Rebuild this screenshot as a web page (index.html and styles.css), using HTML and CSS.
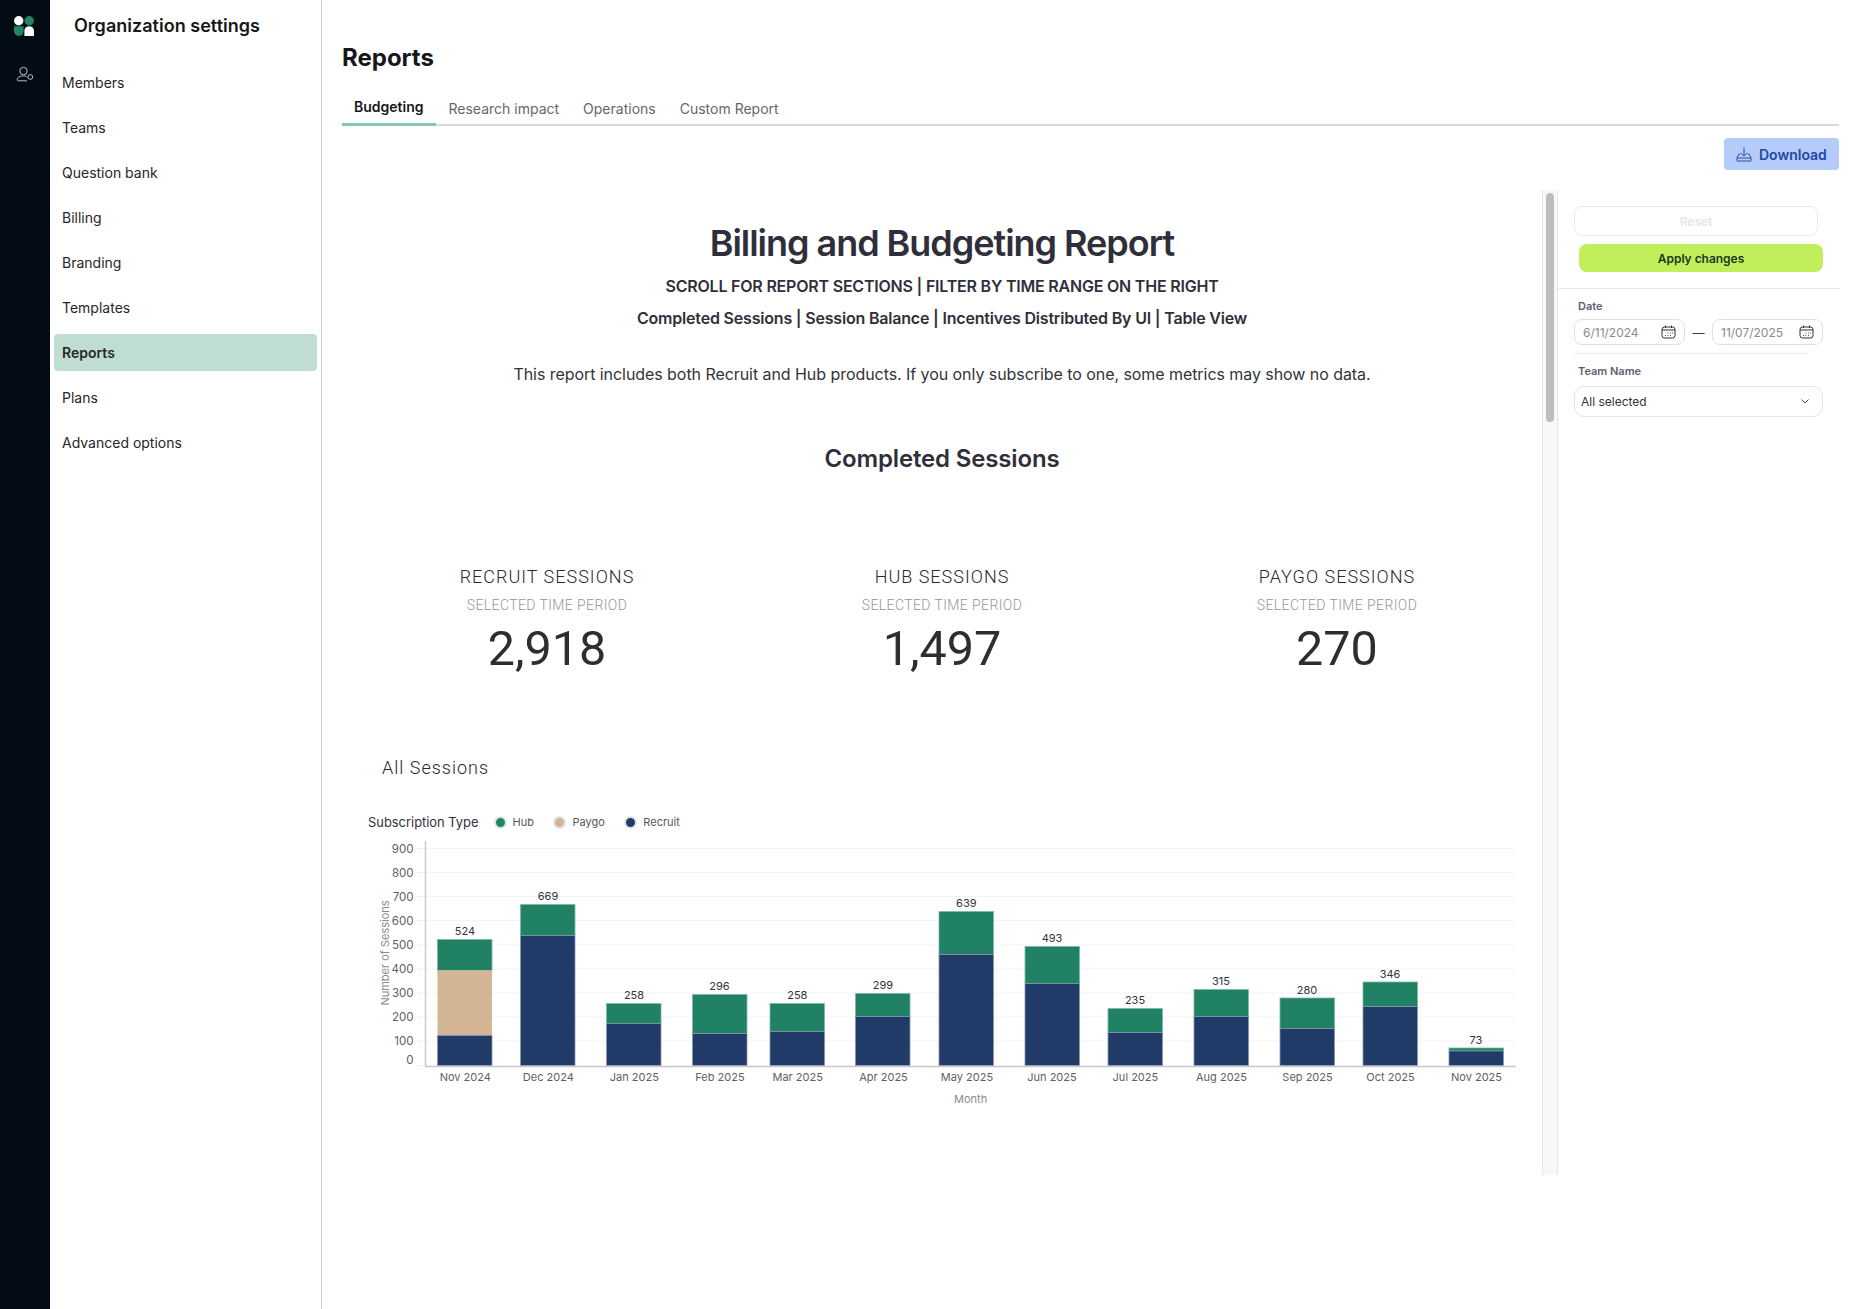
FILE: index.html
```html
<!DOCTYPE html>
<html lang="en">
<head>
<meta charset="utf-8">
<title>Reports</title>
<link rel="stylesheet" href="styles.css">
</head>
<body>
<div class="app">
  <aside class="rail">
    <svg class="logo" width="20" height="20" viewBox="0 0 20 20">
      <circle cx="4.7" cy="4.7" r="4.7" fill="#fff"/>
      <circle cx="15.2" cy="4.7" r="4.7" fill="#1f8563"/>
      <path d="M0 10.2h9.6v5a4.8 4.8 0 0 1-9.6 0z" fill="#1f8563"/>
      <path d="M10.4 20v-5a4.8 4.8 0 0 1 9.6 0v5z" fill="#fff"/>
    </svg>
    <svg class="person" width="18" height="16" viewBox="0 0 18 16" fill="none" stroke="#b9bdc2" stroke-width="1">
      <circle cx="7.500" cy="5" r="3.700"/>
      <path d="M2.500 14.800h8.500M2.500 14.800c-1.800 0-1.600-1.700-.6-2.900 1.100-1.300 3-2 5.600-2 1.200 0 2.200.2 3 .5"/>
      <circle cx="14.300" cy="11" r="2.400"/>
    </svg>
  </aside>
  <nav class="side">
    <h2 class="side-title">Organization settings</h2>
    <ul class="side-list">
      <li class="side-item">Members</li>
      <li class="side-item">Teams</li>
      <li class="side-item">Question bank</li>
      <li class="side-item">Billing</li>
      <li class="side-item">Branding</li>
      <li class="side-item">Templates</li>
      <li class="side-item is-active">Reports</li>
      <li class="side-item">Plans</li>
      <li class="side-item">Advanced options</li>
    </ul>
  </nav>
  <main class="main">
    <h1 class="page-title">Reports</h1>
    <div class="tabs">
      <span class="tab is-active">Budgeting</span>
      <span class="tab">Research impact</span>
      <span class="tab">Operations</span>
      <span class="tab">Custom Report</span>
    </div>
    <div class="toolbar">
      <button class="download">
        <svg width="16" height="15" viewBox="0 0 16 15" fill="none" stroke="#2a4ea8" stroke-width="1">
          <path d="M8 .5v8.500M4.800 5.800 8 9l3.200-3.200"/>
          <path d="M4.200 7H2.800L1 11v2.200q0 .8.8.8h12.400q.8 0 .8-.8V11l-1.800-4h-1.400M1 11h14"/>
        </svg>
        Download
      </button>
    </div>
    <div class="report">
      <section class="content">
        <h2 class="r-title">Billing and Budgeting Report</h2>
        <p class="r-sub r-sub-a">SCROLL FOR REPORT SECTIONS | FILTER BY TIME RANGE ON THE RIGHT</p>
        <p class="r-sub r-sub-b">Completed Sessions | Session Balance | Incentives Distributed By UI | Table View</p>
        <p class="r-note">This report includes both Recruit and Hub products. If you only subscribe to one, some metrics may show no data.</p>
        <h3 class="r-section">Completed Sessions</h3>
        <div class="stats">
          <div class="stat"><div class="stat-label">RECRUIT SESSIONS</div><div class="stat-sub">SELECTED TIME PERIOD</div><div class="stat-num">2,918</div></div>
          <div class="stat"><div class="stat-label">HUB SESSIONS</div><div class="stat-sub">SELECTED TIME PERIOD</div><div class="stat-num">1,497</div></div>
          <div class="stat"><div class="stat-label">PAYGO SESSIONS</div><div class="stat-sub">SELECTED TIME PERIOD</div><div class="stat-num">270</div></div>
        </div>
        <h4 class="chart-title">All Sessions</h4>
        <div class="legend">
          <span class="legend-title">Subscription Type</span>
          <span class="legend-item"><i class="dot dot-hub"></i>Hub</span>
          <span class="legend-item"><i class="dot dot-paygo"></i>Paygo</span>
          <span class="legend-item"><i class="dot dot-recruit"></i>Recruit</span>
        </div>
        <svg class="chart" width="1200" height="265" viewBox="342 840 1200 265">
          <g class="grid">
            <line x1="426" x2="1515" y1="847.500" y2="847.500"/><line x1="426" x2="1515" y1="871.500" y2="871.500"/>
            <line x1="426" x2="1515" y1="895.500" y2="895.500"/><line x1="426" x2="1515" y1="919.500" y2="919.500"/>
            <line x1="426" x2="1515" y1="944" y2="944"/><line x1="426" x2="1515" y1="968" y2="968"/>
            <line x1="426" x2="1515" y1="992" y2="992"/><line x1="426" x2="1515" y1="1016" y2="1016"/>
            <line x1="426" x2="1515" y1="1040" y2="1040"/>
          </g>
          <g class="ticks">
            <line x1="417" x2="423" y1="847.500" y2="847.500"/><line x1="417" x2="423" y1="871.500" y2="871.500"/>
            <line x1="417" x2="423" y1="895.500" y2="895.500"/><line x1="417" x2="423" y1="919.500" y2="919.500"/>
            <line x1="417" x2="423" y1="944" y2="944"/><line x1="417" x2="423" y1="968" y2="968"/>
            <line x1="417" x2="423" y1="992" y2="992"/><line x1="417" x2="423" y1="1016" y2="1016"/>
            <line x1="417" x2="423" y1="1040" y2="1040"/><line x1="417" x2="423" y1="1064.500" y2="1064.500"/>
          </g>
          <g class="bars">
            <rect class="hub" x="437.500" y="938.500" width="54.500" height="31"/><rect class="paygo" x="437.500" y="969.500" width="54.500" height="65"/><rect class="recruit" x="437.500" y="1034.500" width="54.500" height="30"/>
            <rect class="hub" x="520.500" y="903.500" width="54.500" height="31"/><rect class="recruit" x="520.500" y="934.500" width="54.500" height="130"/>
            <rect class="hub" x="606.500" y="1002.500" width="54.500" height="20"/><rect class="recruit" x="606.500" y="1022.500" width="54.500" height="42"/>
            <rect class="hub" x="692.500" y="993.500" width="54.500" height="39"/><rect class="recruit" x="692.500" y="1032.500" width="54.500" height="32"/>
            <rect class="hub" x="770" y="1002.500" width="54.500" height="28"/><rect class="recruit" x="770" y="1030.500" width="54.500" height="34"/>
            <rect class="hub" x="855.500" y="992.500" width="54.500" height="23"/><rect class="recruit" x="855.500" y="1015.500" width="54.500" height="49"/>
            <rect class="hub" x="939" y="910.500" width="54.500" height="43"/><rect class="recruit" x="939" y="953.500" width="54.500" height="111"/>
            <rect class="hub" x="1025" y="945.500" width="54.500" height="37"/><rect class="recruit" x="1025" y="982.500" width="54.500" height="82"/>
            <rect class="hub" x="1108" y="1007.500" width="54.500" height="24"/><rect class="recruit" x="1108" y="1031.500" width="54.500" height="33"/>
            <rect class="hub" x="1194" y="988.500" width="54.500" height="27"/><rect class="recruit" x="1194" y="1015.500" width="54.500" height="49"/>
            <rect class="hub" x="1280" y="997" width="54.500" height="30.500"/><rect class="recruit" x="1280" y="1027.500" width="54.500" height="37"/>
            <rect class="hub" x="1363" y="981" width="54.500" height="24.500"/><rect class="recruit" x="1363" y="1005.500" width="54.500" height="59"/>
            <rect class="hub" x="1449" y="1047" width="54.500" height="3"/><rect class="recruit" x="1449" y="1050" width="54.500" height="14.500"/>
          </g>
          <g class="axis">
            <line x1="425.500" x2="425.500" y1="839" y2="1065.500"/>
            <line x1="425" x2="1516" y1="1065.500" y2="1065.500"/>
          </g>
          <g class="yl">
            <text x="413.500" y="851.500">900</text><text x="413.500" y="875.500">800</text><text x="413.500" y="899.500">700</text>
            <text x="413.500" y="923.500">600</text><text x="413.500" y="948">500</text><text x="413.500" y="972">400</text>
            <text x="413.500" y="996">300</text><text x="413.500" y="1020">200</text><text x="413.500" y="1044">100</text><text x="413.500" y="1063">0</text>
          </g>
          <text class="ytitle" transform="translate(388.500 952) rotate(-90)">Number of Sessions</text>
          <g class="xl">
            <text x="465.300" y="1080">Nov 2024</text><text x="548.300" y="1080">Dec 2024</text><text x="634.300" y="1080">Jan 2025</text>
            <text x="720" y="1080">Feb 2025</text><text x="797.700" y="1080">Mar 2025</text><text x="883.500" y="1080">Apr 2025</text>
            <text x="967" y="1080">May 2025</text><text x="1052" y="1080">Jun 2025</text><text x="1135.400" y="1080">Jul 2025</text>
            <text x="1221.500" y="1080">Aug 2025</text><text x="1307.500" y="1080">Sep 2025</text><text x="1390.500" y="1080">Oct 2025</text>
            <text x="1476.500" y="1080">Nov 2025</text>
          </g>
          <text class="xtitle" x="970.600" y="1102">Month</text>
          <g class="vl">
            <text x="465" y="934">524</text><text x="548" y="899">669</text><text x="634" y="998">258</text>
            <text x="719.500" y="989">296</text><text x="797.300" y="998">258</text><text x="883" y="988">299</text>
            <text x="966.300" y="906">639</text><text x="1052" y="941">493</text><text x="1135" y="1003">235</text>
            <text x="1221" y="984">315</text><text x="1307" y="993">280</text><text x="1390" y="977">346</text>
            <text x="1476" y="1043">73</text>
          </g>
        </svg>
      </section>
      <div class="scroll"><div class="thumb"></div></div>
      <aside class="filters">
        <div class="f-actions">
          <button class="btn-reset">Reset</button>
          <button class="btn-apply">Apply changes</button>
        </div>
        <div class="f-body">
          <div class="f-label">Date</div>
          <div class="f-dates">
            <div class="f-input"><span class="f-value">6/11/2024</span><svg class="cal" width="15" height="14" viewBox="0 0 15 14" fill="none" stroke="#2b2f38"><rect x="1" y="2" width="13" height="11" rx="2.500"/><path d="M1 5h13M4.500 .5v2.500M10.500 .5v2.500"/><path d="M6.500 8h.8M9 8h.8M11 8h.8M6.500 10.500h.8M9 10.500h.8M4 10.500h.8" stroke-width="1"/></svg></div>
            <span class="f-dash">—</span>
            <div class="f-input"><span class="f-value">11/07/2025</span><svg class="cal" width="15" height="14" viewBox="0 0 15 14" fill="none" stroke="#2b2f38"><rect x="1" y="2" width="13" height="11" rx="2.500"/><path d="M1 5h13M4.500 .5v2.500M10.500 .5v2.500"/><path d="M6.500 8h.8M9 8h.8M11 8h.8M6.500 10.500h.8M9 10.500h.8M4 10.500h.8" stroke-width="1"/></svg></div>
          </div>
          <div class="f-rule"></div>
          <div class="f-label">Team Name</div>
          <div class="f-select">All selected<svg width="8" height="5" viewBox="0 0 8 5" fill="none" stroke="#4a4f59"><path d="M.5.500 4 4 7.500.500"/></svg></div>
        </div>
      </aside>
    </div>
  </main>
</div>
</body>
</html>
```
FILE: styles.css
```css
* { box-sizing: border-box; }
html, body { margin: 0; padding: 0; height: 100%; background: #fff; }
body { font-family: Inter, "Noto Sans", sans-serif; color: #1d1d20; }
h1, h2, h3, h4, p, ul { margin: 0; padding: 0; }
.app { display: flex; height: 1309px; overflow: hidden; }

.rail { width: 50px; flex: none; background: #030c15; display: flex; flex-direction: column; align-items: center; }
.logo { margin: 16px 0 0 -2px; }
.person { margin: 30px 0 0 0; }

.side { width: 272px; flex: none; border-right: 1px solid #cfcfcf; padding: 0 4px; }
.side-title { font-size: 18px; font-weight: 600; line-height: 24px; margin: 14px 0 0 20px; color: #17171a; letter-spacing: .02px; }
.side-list { list-style: none; margin-top: 26px; display: flex; flex-direction: column; gap: 8px; }
.side-item { height: 37px; line-height: 37px; padding-left: 8px; font-size: 14px; color: #26262b; border-radius: 4px; }
.side-item.is-active { background: #c0ddd3; font-weight: 600; }

.main { flex: 1; min-width: 0; padding: 0 17px 0 20px; display: flex; flex-direction: column; }
.page-title { font-size: 24px; font-weight: 700; line-height: 30px; margin-top: 43px; color: #17171a; }
.tabs { display: flex; margin-top: 19px; height: 34px; border-bottom: 2px solid #d9d9dc; }
.tab { padding: 7px 12px 0; font-size: 14px; line-height: 20px; color: #66666c; }
.tab.is-active { font-weight: 600; color: #17171a; border-bottom: 3px solid #8cc4b2; height: 34px; padding-top: 5px; margin-right: 1px; }

.toolbar { display: flex; justify-content: flex-end; margin-top: 12px; }
.download { display: flex; align-items: center; gap: 7px; width: 115px; height: 32px; padding: 0 0 0 12px; border: 0; border-radius: 4px; background: #b5cbfa; color: #2148a5; font: 600 14px Inter, sans-serif; }

.report { display: flex; height: 985px; margin-top: 20px; }
.content { width: 1200px; flex: none; display: flex; flex-direction: column; align-items: center; }
.r-title { font-size: 36px; font-weight: 600; letter-spacing: -1.03px; line-height: 44px; margin-top: 31px; color: #2f2f3b; }
.r-sub { font-size: 16px; font-weight: 600; line-height: 22px; color: #2f2f3b; }
.r-sub-a { margin-top: 10px; letter-spacing: -0.21px; }
.r-sub-b { margin-top: 10px; letter-spacing: -0.19px; }
.r-note { font-size: 16px; line-height: 22px; margin-top: 34px; color: #33333a; letter-spacing: -0.06px; }
.r-section { font-size: 24px; font-weight: 600; line-height: 30px; margin-top: 59px; color: #2f2f3b; letter-spacing: -0.15px; }
.stats { display: grid; grid-template-columns: repeat(3, 395px); width: 1185px; margin-top: 91px; text-align: center; font-family: Roboto, sans-serif; font-weight: 300; }
.stat-label { font-size: 18px; letter-spacing: 1px; line-height: 24px; color: #2a2a2a; }
.stat-sub { font-size: 14px; letter-spacing: .4px; line-height: 20px; margin-top: 6px; color: #969696; }
.stat-num { font-size: 48.500px; font-weight: 400; line-height: 60px; margin-top: 4px; padding-bottom: 1px; color: #2e2e2e; }
.chart-title { align-self: flex-start; margin: 76px 0 0 40px; font: 300 18px/24px Roboto, sans-serif; letter-spacing: 1px; color: #2a2a2a; }
.legend { align-self: flex-start; display: flex; align-items: center; margin: 32px 0 0 26px; height: 20px; font-size: 11px; color: #55555c; }
.legend-title { font-size: 12.900px; color: #33333a; margin-right: 15px; }
.legend-item { display: flex; align-items: center; gap: 6px; margin-right: 19.500px; }
.dot { width: 13px; height: 13px; border-radius: 50%; border: 2px solid #dfe5e3; display: block; }
.dot-hub { background: #1f8563; }
.dot-paygo { background: #d3b595; }
.dot-recruit { background: #213b69; }
.chart { align-self: flex-start; display: block; margin-top: 9px; flex: none; }
.grid line { stroke: #f3f3f3; stroke-width: 1; }
.ticks line { stroke: #ececec; stroke-width: 1; }
.axis line { stroke: #c8c8cc; stroke-width: 1.500; }
.hub { fill: #218164; stroke: #7ab9a4; stroke-width: .8; }
.paygo { fill: #d3b595; }
.recruit { fill: #213b69; stroke: #8795ae; stroke-width: .8; }
.yl text { font-size: 11.500px; text-anchor: end; fill: #5e5e63; }
.xl text { font-size: 11px; text-anchor: middle; fill: #5e5e63; }
.vl text { font-size: 11px; text-anchor: middle; fill: #33333a; }
.ytitle { font-size: 11px; text-anchor: middle; fill: #8a8a8e; }
.xtitle { font-size: 11px; text-anchor: middle; fill: #8a8a8e; }

.scroll { width: 16px; flex: none; background: #f8f8f8; border-left: 1px solid #e6e6e8; border-right: 1px solid #e6e6e8; padding: 3px 3px 0; }
.thumb { width: 8px; height: 229px; border-radius: 4px; background: #bdbdbd; }
.filters { flex: 1; min-width: 0; }
.f-actions { padding: 16px 0 0 16px; height: 99px; border-bottom: 1px solid #e3e3ea; }
.btn-reset { display: block; width: 244px; height: 30px; border: 1px solid #e6e6ee; border-radius: 8px; background: #fff; color: #e6e6e6; font: 600 12px Inter, sans-serif; }
.btn-apply { display: block; width: 244px; height: 28px; margin: 8px 0 0 5px; border: 0; border-radius: 8px; background: #c3ee5b; color: #173a1e; font: 600 12px Inter, sans-serif; letter-spacing: -.03px; }
.f-body { padding: 10px 16px 0; }
.f-label { font-size: 11px; font-weight: 600; line-height: 14px; color: #5e5e6e; padding-left: 4px; }
.f-dates { display: flex; align-items: center; margin-top: 6px; width: 249px; }
.f-input { width: 111px; height: 26px; border: 1px solid #dfdfe8; border-radius: 8px; padding: 0 8px; font-size: 12px; color: #8a8a8f; display: flex; align-items: center; justify-content: space-between; }
.f-value { padding-top: 1px; }
.f-dash { flex: 1; text-align: center; font-size: 12px; color: #3a3a40; }
.f-rule { width: 233px; height: 1px; background: #ececf0; margin: 8px 0 10px; }
.f-select { width: 249px; height: 31px; margin-top: 8px; border: 1px solid #e3e3ea; border-radius: 10px; padding: 0 13px 0 6px; font-size: 12px; color: #33333a; display: flex; align-items: center; justify-content: space-between; }
```
